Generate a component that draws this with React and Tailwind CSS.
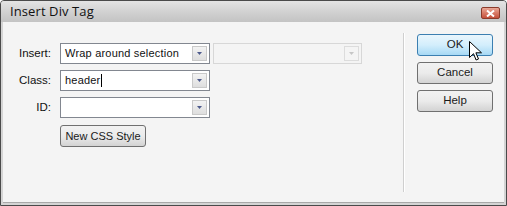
function Arrow({ disabled }) {
  return (
    <div
      className={
        'absolute right-[2px] top-[2px] bottom-[2px] w-[15px] flex items-center justify-center border ' +
        (disabled
          ? 'border-[#dcdcdc] bg-[#f4f4f4]'
          : 'border-[#c9c9c9] bg-gradient-to-b from-[#f3f3f3] to-[#dedede]')
      }
    >
      <svg width="5" height="3" viewBox="0 0 5 3">
        <path d="M0 0h5L2.5 3z" fill={disabled ? '#c6c6c6' : '#4d5a8c'} />
      </svg>
    </div>
  )
}

function Select({ value, caret, disabled, width = 'w-[150px]' }) {
  return (
    <div
      className={
        'relative h-[21px] border flex items-center pl-[4px] ' +
        width +
        (disabled ? ' border-[#d7d7d7] bg-[#f4f4f4]' : ' border-[#828790] bg-white')
      }
    >
      <span className="text-[11px] leading-none text-[#111] tracking-[0.2px]">{value}</span>
      {caret && <span className="ml-[1px] w-px h-[13px] bg-black" />}
      <Arrow disabled={disabled} />
    </div>
  )
}

function Button({ children, hover, className = '' }) {
  return (
    <div
      className={
        'h-[22px] rounded-[3px] border flex items-center justify-center text-[11.5px] text-[#1a1a1a] ' +
        (hover
          ? 'border-[#3c7fb1] bg-gradient-to-b from-[#eaf6fd] via-[#d3eefc] to-[#a7d9f5] '
          : 'border-[#707070] bg-gradient-to-b from-[#f2f2f2] via-[#ebebeb] to-[#d3d3d3] ') +
        className
      }
    >
      {children}
    </div>
  )
}

export default function App() {
  return (
    <div
      className="relative w-[507px] h-[206px] bg-[#d4d4d4] border border-[#4a4a4a] rounded-t-[4px] overflow-hidden flex flex-col"
      style={{ fontFamily: '"Liberation Sans", Arial, sans-serif' }}
    >
      {/* title bar */}
      <div className="relative h-[21px] shrink-0 bg-gradient-to-b from-[#e4e4e4] via-[#d2d2d2] to-[#c3c3c3] flex items-center pl-[9px]">
        <span className="text-[13px] text-[#111] tracking-[0.1px]" style={{ fontFamily: '"Open Sans", sans-serif' }}>
          Insert Div Tag
        </span>
        <div className="absolute left-[480px] top-[6px] w-[19px] h-[12px] rounded-[2px] border border-[#8b3b2b] bg-gradient-to-b from-[#e9a897] via-[#d87a66] to-[#c4503b] flex items-center justify-center">
          <svg width="9" height="7" viewBox="0 0 9 7">
            <path d="M1 0.5l7 6M8 0.5l-7 6" stroke="white" strokeWidth="2" />
          </svg>
        </div>
      </div>

      {/* body */}
      <div className="flex-1 mx-[2px] mb-[2px] bg-[#f4f4f4] border-b border-[#a8a8a8] flex">
        <div className="w-[400px] pt-[21px] flex flex-col gap-[6px]">
          <div className="flex items-center">
            <span className="w-[48px] text-right text-[11.5px] text-[#111]">Insert:</span>
            <div className="ml-[9px] flex gap-[3px]">
              <Select value="Wrap around selection" />
              <Select value="" disabled width="w-[149px]" />
            </div>
          </div>
          <div className="flex items-center">
            <span className="w-[48px] text-right text-[11.5px] text-[#111]">Class:</span>
            <div className="ml-[9px]">
              <Select value="header" caret />
            </div>
          </div>
          <div className="flex items-center">
            <span className="w-[48px] text-right text-[11.5px] text-[#111]">ID:</span>
            <div className="ml-[9px]">
              <Select value="" />
            </div>
          </div>
          <div className="pl-[57px] pt-[1px]">
            <Button className="w-[86px] h-[21px] text-[11px]">New CSS Style</Button>
          </div>
        </div>

        <div className="mt-[11px] h-[159px] w-[2px] border-l border-[#cfcfcf] border-r border-r-white" />

        <div className="pl-[12px] pt-[12px] flex flex-col gap-[6px]">
          <Button hover className="w-[76px]">OK</Button>
          <Button className="w-[76px]">Cancel</Button>
          <Button className="w-[76px]">Help</Button>
        </div>
      </div>

      {/* mouse pointer */}
      <svg className="absolute left-[468px] top-[40px]" width="13" height="21" viewBox="0 0 13 21">
        <path
          d="M0.5 0.5v16l4-3.8 2.6 6.3 2.4-1-2.6-6.2h5.6z"
          fill="white"
          stroke="black"
          strokeWidth="1"
          strokeLinejoin="miter"
        />
      </svg>
    </div>
  )
}
